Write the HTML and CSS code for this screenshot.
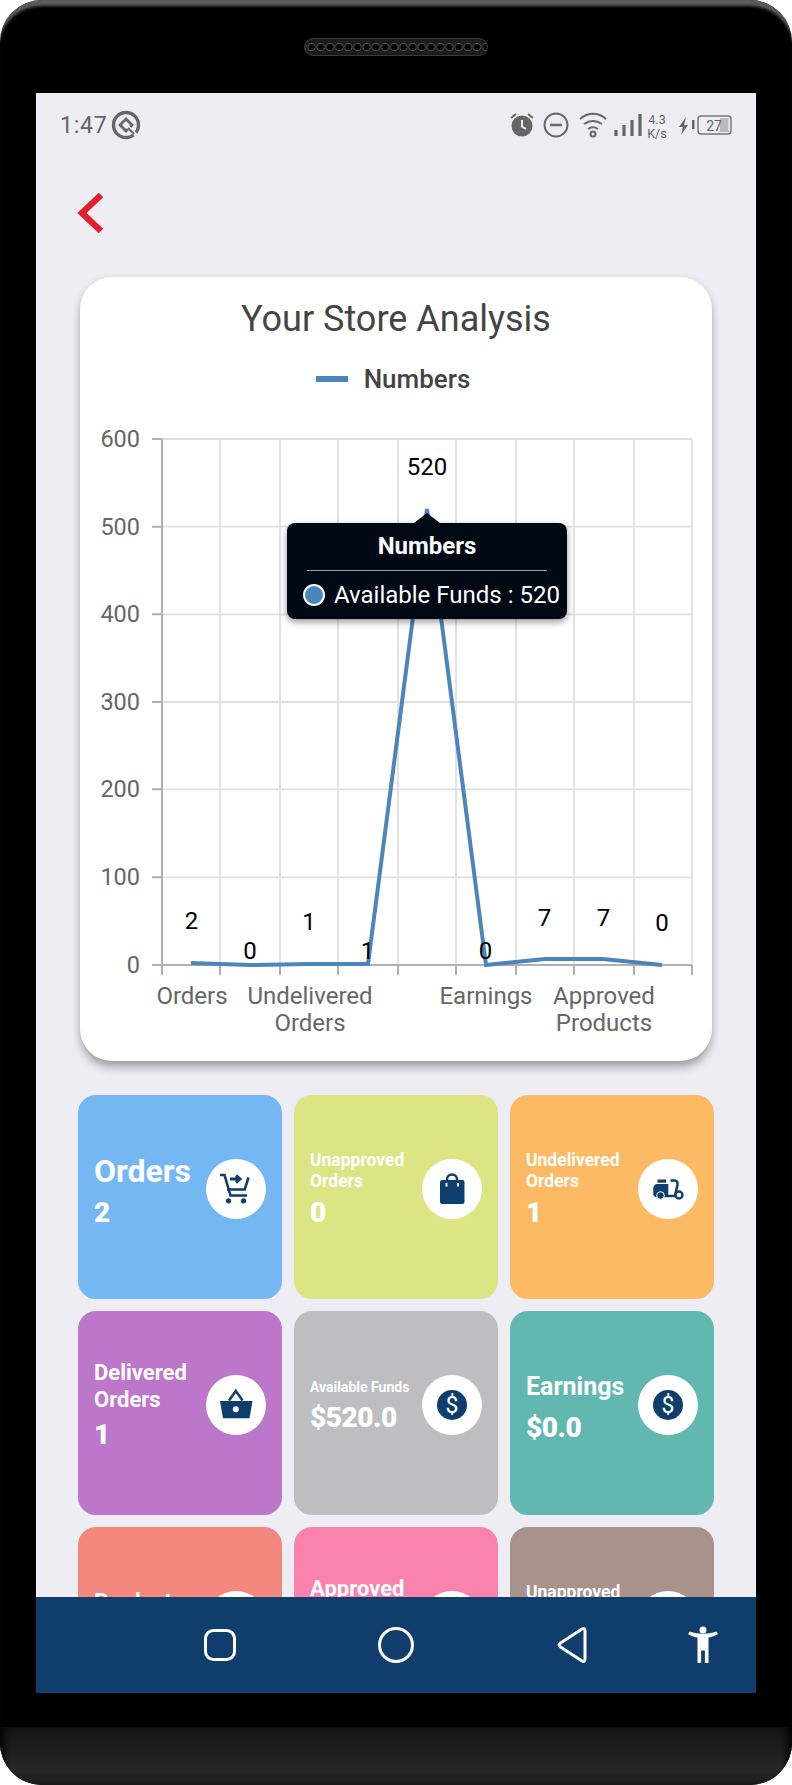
FILE: index.html
```html
<!DOCTYPE html>
<html lang="en">
<head>
  <meta charset="UTF-8">
  <title>Your Store Analysis</title>
  <meta name="viewport" content="width=device-width, initial-scale=1">
  <link rel="stylesheet" href="styles.css">
</head>
<body>
  <svg class="defs" width="0" height="0">
    <symbol id="dollar" viewBox="0 0 60 60">
      <circle cx="30" cy="30" r="15" fill="#0f3d6c"/>
      <text x="30" y="38" text-anchor="middle" class="dollar-sign">$</text>
    </symbol>
  </svg>

  <div class="device">
    <div class="top-bezel"><div class="speaker"></div></div>

    <div class="screen">
      <div class="status">
        <div class="status-left">
          <span class="clock">1:47</span>
          <svg width="30" height="30" viewBox="0 0 30 30" fill="none" stroke="#666">
            <circle cx="15" cy="15" r="12.500" stroke-width="3.400"/>
            <path d="M15 9 9 15l6 6 6-6z" stroke-width="2.800"/>
            <path d="M16 16l10 10" stroke="#eeedf3" stroke-width="3.500"/>
            <path d="M17 18l6 6" stroke-width="2"/>
          </svg>
        </div>
        <svg width="226" height="36" viewBox="510 107 226 36">
          <circle cx="522" cy="126" r="10.500" fill="#666"/>
          <path d="M522 120v6.500l4 2.500" fill="none" stroke="#eeedf3" stroke-width="2"/>
          <path d="M511 118l5-4M533 118l-5-4" stroke="#666" stroke-width="2"/>
          <circle cx="556" cy="125" r="11.500" fill="none" stroke="#666" stroke-width="2"/>
          <path d="M550 125h12" stroke="#666" stroke-width="2.500"/>
          <path d="M580 119c8-7 18-7 26 0M584 124c6-4 12-4 18 0M588 129c3-2 7-2 10 0" fill="none" stroke="#666" stroke-width="2"/>
          <circle cx="593" cy="134" r="2.500" fill="none" stroke="#666" stroke-width="2"/>
          <path d="M616 130v6M624 125v11M632 120v16M640 114v22" stroke="#666" stroke-width="3.200"/>
          <text x="657" y="124" class="speed">4.3</text>
          <text x="657" y="138" class="speed">K/s</text>
          <path d="M686 117l-7 10h4l-2 8 7-10h-4z" fill="#666"/>
          <rect x="692" y="120" width="2.500" height="9" fill="#666"/>
          <rect x="698" y="116" width="33" height="18" rx="3" fill="none" stroke="#777" stroke-width="1.500"/>
          <rect x="720" y="118" width="8.500" height="14" fill="#bbb"/>
          <text x="714" y="131" class="battery">27</text>
        </svg>
      </div>

      <div class="content">
        <div class="back">
          <svg width="30" height="44" viewBox="0 0 30 44" fill="none">
            <path d="M26 4 7 22l19 18" stroke="#e0202c" stroke-width="6.500"/>
          </svg>
        </div>

        <div class="chart-card">
          <div class="chart-title">Your Store Analysis</div>
          <div class="legend">
            <span class="legend-mark"></span>
            <span>Numbers</span>
          </div>

          <svg class="chart" width="632" height="651" viewBox="80 410 632 651">
            <g class="grid">
              <path d="M162 439H692M162 526.700H692M162 614.300H692M162 702H692M162 789.300H692M162 877.300H692"/>
              <path d="M220 439V965M280 439V965M338 439V965M398 439V965M456 439V965M516 439V965M574 439V965M634 439V965M692 439V965"/>
            </g>
            <g class="axis">
              <path d="M162 439V975M152 965H692"/>
              <path d="M152 439H162M152 526.700H162M152 614.300H162M152 702H162M152 789.300H162M152 877.300H162"/>
              <path d="M220 965V975M280 965V975M338 965V975M398 965V975M456 965V975M516 965V975M574 965V975M634 965V975M692 965V975"/>
            </g>
            <g class="y-labels">
              <text x="140" y="447">600</text>
              <text x="140" y="534.700">500</text>
              <text x="140" y="622.300">400</text>
              <text x="140" y="710">300</text>
              <text x="140" y="797.300">200</text>
              <text x="140" y="885.300">100</text>
              <text x="140" y="973">0</text>
            </g>
            <g class="x-labels">
              <text x="192" y="1003.500">Orders</text>
              <text x="310" y="1003.500">Undelivered</text>
              <text x="310" y="1031">Orders</text>
              <text x="486" y="1003.500">Earnings</text>
              <text x="604" y="1003.500">Approved</text>
              <text x="604" y="1031">Products</text>
            </g>
            <polyline class="series" points="191,963 250,965 309,964 368,964 427,509 486,965 545,959 603,959 662,965"/>
            <g class="data-labels">
              <text x="427" y="475">520</text>
              <text x="191.500" y="929">2</text>
              <text x="250" y="959">0</text>
              <text x="309" y="930">1</text>
              <text x="367.500" y="959">1</text>
              <text x="485.500" y="959">0</text>
              <text x="544.500" y="925.500">7</text>
              <text x="603.500" y="925.500">7</text>
              <text x="662" y="930.500">0</text>
            </g>
          </svg>

          <div class="tooltip">
            <div class="tooltip-title">Numbers</div>
            <div class="tooltip-row">
              <span class="tooltip-dot"></span>
              <span>Available Funds : 520</span>
            </div>
          </div>
        </div>

        <div class="tiles">
          <div class="tile tile-blue">
            <div class="tile-text">
              <div class="tile-title title-xl">Orders</div>
              <div class="tile-value">2</div>
            </div>
            <div class="tile-icon">
              <svg width="60" height="60" viewBox="0 0 60 60" fill="none" stroke="#0f3d6c" stroke-width="2.600">
                <path d="M14 16h4.500l6 20.500H41"/>
                <path d="M42.500 18.500 38.700 30.500H21"/>
                <path d="M24 20h10M30 16.500l4 3.500-4 3.500" stroke-width="3"/>
                <circle cx="22.500" cy="41.800" r="2.600" fill="#0f3d6c" stroke="none"/>
                <circle cx="37.500" cy="41.800" r="2.600" fill="#0f3d6c" stroke="none"/>
              </svg>
            </div>
          </div>

          <div class="tile tile-lime">
            <div class="tile-text">
              <div class="tile-title title-sm">Unapproved Orders</div>
              <div class="tile-value">0</div>
            </div>
            <div class="tile-icon">
              <svg width="60" height="60" viewBox="0 0 60 60">
                <path d="M25 24v-3.500a5 5 0 0 1 10 0V24" fill="none" stroke="#0f3d6c" stroke-width="2.500"/>
                <rect x="18" y="21" width="24.500" height="24" rx="2" fill="#0f3d6c"/>
                <path d="M24.500 24v3.500M36 24v3.500" stroke="#fff" stroke-width="2"/>
              </svg>
            </div>
          </div>

          <div class="tile tile-orange">
            <div class="tile-text">
              <div class="tile-title title-sm">Undelivered Orders</div>
              <div class="tile-value">1</div>
            </div>
            <div class="tile-icon">
              <svg width="60" height="60" viewBox="0 0 60 60">
                <rect x="19.500" y="20.500" width="8.500" height="3.200" fill="#0f3d6c"/>
                <path d="M15.300 36v-6.500q0-4.500 4.500-4.500h10.500v13H17z" fill="#0f3d6c"/>
                <path d="M32.500 21.500h4q3.500 0 3 4l-2.500 11.500H26" fill="none" stroke="#0f3d6c" stroke-width="2.500"/>
                <circle cx="22.500" cy="36.500" r="3.800" fill="#0f3d6c" stroke="#fff"/>
                <circle cx="41" cy="36" r="3.500" fill="#fff" stroke="#0f3d6c" stroke-width="2.400"/>
              </svg>
            </div>
          </div>

          <div class="tile tile-purple">
            <div class="tile-text">
              <div class="tile-title title-md">Delivered Orders</div>
              <div class="tile-value">1</div>
            </div>
            <div class="tile-icon">
              <svg width="60" height="60" viewBox="0 0 60 60">
                <path d="M23 25.500 29.800 16l6.800 9.500" fill="none" stroke="#0f3d6c" stroke-width="2.500"/>
                <path d="M14 26h32.500l-3 17.300H17z" fill="#0f3d6c"/>
                <circle cx="29.800" cy="34.300" r="3" fill="#fff"/>
              </svg>
            </div>
          </div>

          <div class="tile tile-gray">
            <div class="tile-text">
              <div class="tile-title title-xs">Available Funds</div>
              <div class="tile-value">$520.0</div>
            </div>
            <div class="tile-icon">
              <svg width="60" height="60"><use href="#dollar"/></svg>
            </div>
          </div>

          <div class="tile tile-teal">
            <div class="tile-text">
              <div class="tile-title title-lg">Earnings</div>
              <div class="tile-value">$0.0</div>
            </div>
            <div class="tile-icon">
              <svg width="60" height="60"><use href="#dollar"/></svg>
            </div>
          </div>

          <div class="tile tile-salmon">
            <div class="tile-text">
              <div class="tile-title title-md">Products</div>
              <div class="tile-value"></div>
            </div>
            <div class="tile-icon"></div>
          </div>

          <div class="tile tile-pink">
            <div class="tile-text">
              <div class="tile-title title-md">Approved Products</div>
              <div class="tile-value"></div>
            </div>
            <div class="tile-icon"></div>
          </div>

          <div class="tile tile-brown">
            <div class="tile-text">
              <div class="tile-title title-sm">Unapproved Products</div>
              <div class="tile-value"></div>
            </div>
            <div class="tile-icon"></div>
          </div>
        </div>
      </div>

      <div class="navbar">
        <svg width="40" height="40" viewBox="0 0 40 40" fill="none" stroke="#fff" stroke-width="3">
          <rect x="5.500" y="5.500" width="29" height="29" rx="8"/>
        </svg>
        <svg width="40" height="40" viewBox="0 0 40 40" fill="none" stroke="#fff" stroke-width="3">
          <circle cx="20" cy="20" r="16.500"/>
        </svg>
        <svg width="40" height="40" viewBox="0 0 40 40" fill="none" stroke="#fff" stroke-width="3">
          <path d="M33 6q0-3.500-3-2L8.500 18q-3 2 0 4L30 36q3 1.500 3-2z" stroke-linejoin="round"/>
        </svg>
        <svg class="nav-access" width="40" height="40" viewBox="0 0 40 40" fill="#fff">
          <circle cx="20" cy="5" r="3.500"/>
          <path d="M5 9l1.500-2.500c9 3 18 3 27 0L35 9c-3 2-6 3-9.500 3.500V38h-3.600V25.500h-3.800V38H14.500V12.500C11 12 8 11 5 9z"/>
        </svg>
      </div>
    </div>

    <div class="black-strip"></div>
    <div class="chin"></div>
  </div>
</body>
</html>
```

FILE: styles.css
```css
* {
  box-sizing: border-box;
}
body {
  margin: 0;
  background: #fff;
  font-family: Roboto, sans-serif;
}
.defs {
  position: absolute;
}
.device {
  width: 792px;
  height: 1785px;
  background: #000;
  border-radius: 42px;
  overflow: hidden;
  box-shadow: inset 0 8px 3px -2px #5c5c5c;
}
.top-bezel {
  height: 93px;
  display: flex;
  justify-content: center;
  align-items: center;
}
.speaker {
  width: 184px;
  height: 18px;
  border-radius: 9px;
  border: 1px solid #3a3a3a;
  background: radial-gradient(circle at center, #000 3px, #555 3.6px, #1c1c1c 4.6px) repeat-x 2px 0;
  background-size: 9.2px 16px;
}
.screen {
  margin: 0 36px;
  height: 1600px;
  background: #eeedf3;
  display: flex;
  flex-direction: column;
}
.status {
  height: 64px;
  flex: none;
  display: flex;
  justify-content: space-between;
  align-items: center;
  padding: 0 20px 0 24px;
}
.status-left {
  display: flex;
  align-items: center;
  gap: 3px;
}
.clock {
  font-size: 23px;
  letter-spacing: 0.8px;
  color: #666;
}
.speed {
  font-size: 12.5px;
  fill: #666;
  text-anchor: middle;
}
.battery {
  font-size: 14px;
  fill: #666;
  text-anchor: middle;
}
.content {
  flex: 1;
  min-height: 0;
  overflow: hidden;
}
.back {
  height: 120px;
  padding: 34px 0 0 39px;
}
.chart-card {
  position: relative;
  width: 632px;
  height: 784px;
  margin-left: 44px;
  background: #fff;
  border-radius: 32px;
  box-shadow: 0 7px 10px -1px rgba(0, 0, 0, 0.32), 0 0 6px rgba(0, 0, 0, 0.08);
}
.chart-title {
  height: 82px;
  line-height: 84px;
  text-align: center;
  font-size: 36px;
  color: #444;
}
.legend {
  height: 40px;
  margin-bottom: 11px;
  padding-right: 6px;
  display: flex;
  justify-content: center;
  align-items: center;
  gap: 16px;
  font-size: 26px;
  font-weight: 500;
  color: #444;
}
.legend-mark {
  width: 32px;
  height: 6px;
  background: #4a86bc;
}
.chart {
  display: block;
}
.grid path {
  fill: none;
  stroke: #e0e0e0;
  stroke-width: 1.8;
}
.axis path {
  fill: none;
  stroke: #b0b0b0;
  stroke-width: 2;
}
.y-labels text {
  font-size: 23.5px;
  fill: #666;
  text-anchor: end;
}
.x-labels text {
  font-size: 24px;
  fill: #666;
  text-anchor: middle;
}
.data-labels text {
  font-size: 24px;
  fill: #000;
  text-anchor: middle;
}
.series {
  fill: none;
  stroke: #4a86bc;
  stroke-width: 4;
}
.tooltip {
  position: absolute;
  left: 207px;
  top: 246px;
  width: 280px;
  height: 96px;
  padding: 0 8px;
  background: #000814;
  border-radius: 8px;
  color: #fff;
  font-size: 24px;
  box-shadow: 0 3px 7px rgba(0, 0, 0, 0.4);
}
.tooltip::before {
  content: "";
  position: absolute;
  left: 127px;
  top: -10px;
  border-left: 13px solid transparent;
  border-right: 13px solid transparent;
  border-bottom: 10px solid #000814;
}
.tooltip-title {
  height: 48px;
  margin: 0 12px;
  line-height: 47px;
  text-align: center;
  font-weight: 700;
  border-bottom: 1px solid #9a9ea6;
}
.tooltip-row {
  height: 48px;
  display: flex;
  align-items: center;
  gap: 9px;
  white-space: nowrap;
  padding-left: 8px;
}
.tooltip-dot {
  width: 22px;
  height: 22px;
  flex: none;
  border-radius: 50%;
  background: #4a86bc;
  border: 2px solid #fff;
}
.tiles {
  display: grid;
  grid-template-columns: repeat(3, 204px);
  grid-auto-rows: 204px;
  gap: 12px;
  margin-top: 34px;
  padding-left: 42px;
}
.tile {
  display: flex;
  align-items: center;
  padding: 0 16px 16px;
  border-radius: 18px;
  color: #fff;
}
.tile-blue { background: #74b7f3; }
.tile-lime { background: #dde484; }
.tile-orange { background: #fbba63; }
.tile-purple { background: #bc76ca; }
.tile-gray { background: #bebec0; }
.tile-teal { background: #61b8b1; }
.tile-salmon { background: #f3887e; }
.tile-pink { background: #fa83ad; }
.tile-brown { background: #a89289; }
.tile-text {
  flex: 1;
  min-width: 0;
  padding-top: 4px;
}
.tile-title {
  font-weight: 700;
}
.title-xl {
  font-size: 32px;
  line-height: 40px;
}
.title-lg {
  font-size: 25px;
  line-height: 38px;
}
.title-md {
  font-size: 22px;
  line-height: 26.5px;
}
.title-sm {
  font-size: 17.5px;
  line-height: 20.5px;
}
.title-xs {
  font-size: 14px;
  line-height: 18px;
}
.tile-value {
  min-height: 38px;
  margin-top: 3px;
  font-size: 28px;
  font-weight: 900;
  letter-spacing: -0.5px;
  line-height: 38px;
}
.tile-icon {
  width: 60px;
  height: 60px;
  flex: none;
  border-radius: 50%;
  background: #fff;
}
.tile-icon svg {
  display: block;
}
.dollar-sign {
  font-size: 23px;
  fill: #fff;
}
.navbar {
  height: 96px;
  flex: none;
  display: flex;
  align-items: center;
  gap: 136px;
  padding-left: 164px;
  background: #0f3d6c;
}
.nav-access {
  margin-left: -45px;
}
.black-strip {
  height: 34px;
}
.chin {
  height: 58px;
  background: linear-gradient(#141414, #272727 75%, #1c1c1c);
  box-shadow: inset 10px 0 8px -6px #000, inset -10px 0 8px -6px #000;
}
```
